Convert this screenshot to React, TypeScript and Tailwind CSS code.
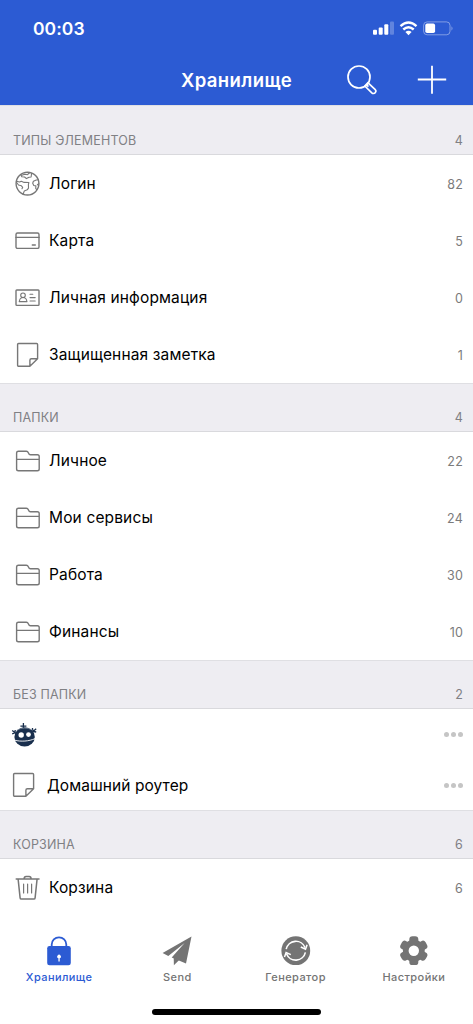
import type { ReactNode } from "react";

interface Entry {
  icon: ReactNode;
  label: string;
  count: number;
}

interface HeadingProps {
  title: string;
  count: number;
  className?: string;
}

interface TabProps {
  icon: ReactNode;
  label: string;
  active?: boolean;
}

const lineIcon = {
  width: 26,
  height: 26,
  viewBox: "0 0 26 26",
  fill: "none",
  stroke: "#777777",
  strokeWidth: 1.4,
  strokeLinejoin: "round" as const,
  strokeLinecap: "round" as const,
};

function GlobeIcon() {
  return (
    <svg {...lineIcon}>
      <circle cx="12.5" cy="12.6" r="11.4" />
      <path
        d="M5.7 3.6 6.8 5.8l2.8.2 1.8 1.6 2.7-1.4 2-.2.5-3.8M6.2 4.5l3.5-1.2 2.8.4 1.8-1.7M1.5 10.3l3.1.7 1.7-.8 2.8 1.2 4.8.1-.5 1.8.1 3.8-1.3 1.7-2.9 1.1-1.2 3.4M1.3 11l2.2 3 2.9.8 1.3 1.5-.7 1.4M23.5 8.8l-2.2.2-2.9 1.3-.7 2 1.1 2.2 2.1.4-.2 2.5 1 1.3M23.7 12.8l-1.3 1"
        strokeWidth="1.1"
      />
    </svg>
  );
}

function CardIcon() {
  return (
    <svg {...lineIcon}>
      <rect x="1" y="5" width="23" height="15.4" rx="1.5" />
      <path d="M1 9.4h23M17.3 17h3" />
    </svg>
  );
}

function IdentityIcon() {
  return (
    <svg {...lineIcon}>
      <rect x="1" y="5" width="23" height="15.4" rx=".8" />
      <g strokeWidth="1.1">
        <circle cx="8" cy="10.3" r="2.3" />
        <path d="M6.9 12.6c-1.6.7-2.5 2-2.7 4h7.8c-.2-2-1.2-3.3-2.8-4M15 9.3h2.8M15 12.6h5.2M15 16h5.2" />
      </g>
    </svg>
  );
}

function NoteIcon() {
  return (
    <svg {...lineIcon}>
      <path d="M3.6 1.5h18a1 1 0 0 1 1 1v14.2l-7.7 7.6H3.6a1 1 0 0 1-1-1V2.5a1 1 0 0 1 1-1ZM14.9 24.3v-6.1a1.5 1.5 0 0 1 1.5-1.5h6.2" />
    </svg>
  );
}

function FolderIcon() {
  return (
    <svg {...lineIcon}>
      <path d="M1.6 20.9V4.9a1.8 1.8 0 0 1 1.8-1.7h8c2.7 0 1.4 3.5 4 3.5h7a1.8 1.8 0 0 1 1.8 1.8v12.4a1.8 1.8 0 0 1-1.8 1.8h-19a1.8 1.8 0 0 1-1.8-1.8ZM1.6 11.4h22.6" />
    </svg>
  );
}

function TrashIcon() {
  return (
    <svg {...lineIcon} strokeWidth="1.5">
      <path d="M1.2 3.9h22.8M3.1 3.9l2 19a1.3 1.3 0 0 0 1.3 1.2h12.4a1.3 1.3 0 0 0 1.3-1.2l2-19M9.1 3.9c0-1.6.7-2.3 2-2.3h3c1.3 0 2 .7 2 2.3" />
      <path d="M8.6 9v9M12.6 9v9M16.6 9v9" strokeWidth="1.2" />
    </svg>
  );
}

function RobotIcon() {
  return (
    <svg width="26" height="26" viewBox="0 0 26 26">
      <g stroke="#192f4d" strokeWidth="1.3" fill="none">
        <path d="M12.4 1v5M9.4 4.2h6M1.2 8.5l4 3M1.2 11.8l2.8-1 .2-2.8M25.2 6.8l-4 3.4M21.4 6l.6 3.4 3.2.6" />
      </g>
      <ellipse cx="13.6" cy="14.9" rx="10.2" ry="9.6" fill="#192f4d" />
      <path d="M5.6 8.4Q13 4 21.4 7.9" stroke="#8d9bab" strokeWidth=".6" fill="none" />
      <circle cx="10.2" cy="13" r="2.7" fill="#fff" />
      <circle cx="17.5" cy="12.6" r="2.4" fill="#fff" />
      <path d="M3.6 18.2c6.5 1.6 14 1.2 20.6-1.6" stroke="#fff" strokeWidth=".9" fill="none" />
    </svg>
  );
}

function LockIcon() {
  return (
    <svg width="30" height="30" viewBox="0 0 30 30">
      <path d="M7.7 11V8.6a7.3 7.3 0 0 1 14.6 0V11" fill="none" stroke="#2c5bd3" strokeWidth="1.8" />
      <rect x="3.2" y="10" width="23.6" height="19.2" rx="2.3" fill="#2c5bd3" />
      <path d="M14.4 22.3v3.2h1.3v-3.2a1.8 1.8 0 1 0-1.3 0Z" fill="#fff" />
    </svg>
  );
}

function SendIcon() {
  return (
    <svg width="30" height="30" viewBox="0 0 30 30" fill="#747474">
      <path d="M29.5.4.6 16.9l5.7 3L22.6 6.9 9.7 21.4l3.6 1.6L24 27.6Z" />
      <path d="m11.7 21.5.2 7.8 5.3-5.2Z" />
    </svg>
  );
}

function GeneratorIcon() {
  return (
    <svg width="30" height="30" viewBox="0 0 30 30">
      <circle cx="14.8" cy="14.7" r="14.4" fill="#747474" />
      <g fill="none" stroke="#fff" strokeWidth="1.6">
        <path d="M5.2 13.2a9.9 9.9 0 0 1 18.9-1.6M24.4 16.4a9.9 9.9 0 0 1-18.9 1.4" />
        <path d="m19.8 11 4.7 2.2 1.6-4.5M9.8 18.6l-4.7-2.1-1.6 4.4" strokeWidth="1.5" />
      </g>
    </svg>
  );
}

function GearIcon() {
  return (
    <svg width="30" height="30" viewBox="0 0 30 30">
      <g fill="#747474">
        <circle cx="14.8" cy="14.7" r="10.9" />
        <rect x="10.3" y=".3" width="9" height="28.8" rx="3.2" />
        <rect x="10.3" y=".3" width="9" height="28.8" rx="3.2" transform="rotate(60 14.8 14.7)" />
        <rect x="10.3" y=".3" width="9" height="28.8" rx="3.2" transform="rotate(120 14.8 14.7)" />
      </g>
      <circle cx="14.8" cy="14.8" r="5.2" fill="#fff" />
    </svg>
  );
}

const types: Entry[] = [
  { icon: <GlobeIcon />, label: "Логин", count: 82 },
  { icon: <CardIcon />, label: "Карта", count: 5 },
  { icon: <IdentityIcon />, label: "Личная информация", count: 0 },
  { icon: <NoteIcon />, label: "Защищенная заметка", count: 1 },
];

const folders: Entry[] = [
  { icon: <FolderIcon />, label: "Личное", count: 22 },
  { icon: <FolderIcon />, label: "Мои сервисы", count: 24 },
  { icon: <FolderIcon />, label: "Работа", count: 30 },
  { icon: <FolderIcon />, label: "Финансы", count: 10 },
];

function Heading({ title, count, className = "h-[49px]" }: HeadingProps) {
  return (
    <div
      className={`flex shrink-0 items-end justify-between border-y border-t-[#dfdfe3] border-b-[#d9d9dd] bg-[#eeedf2] pr-[10px] pb-[4px] pl-[13px] text-[12.5px] leading-[18px] tracking-[0.18px] text-[#808084] ${className}`}
    >
      <h2>{title}</h2>
      <span>{count}</span>
    </div>
  );
}

function Row({ icon, label, count }: Entry) {
  return (
    <div className="flex h-[57px] shrink-0 items-center pr-[10px] pl-[15px]">
      {icon}
      <span className="ml-2 flex-1 text-[15.5px] tracking-[0.14px]">{label}</span>
      <span className="pt-[2px] text-[12.5px] leading-[18px] tracking-[0.2px] text-[#7b7b7b]">
        {count}
      </span>
    </div>
  );
}

function Dots() {
  return (
    <div className="flex gap-[2px]">
      <i className="size-[5px] rounded-full bg-[#c5c5c5]" />
      <i className="size-[5px] rounded-full bg-[#c5c5c5]" />
      <i className="size-[5px] rounded-full bg-[#c5c5c5]" />
    </div>
  );
}

function Tab({ icon, label, active = false }: TabProps) {
  return (
    <button
      className={`flex flex-col items-center text-[11px] leading-[14px] font-medium tracking-[0.42px] ${
        active ? "text-[#2c5bd3]" : "text-[#747474]"
      }`}
    >
      {icon}
      <span className="mt-[4px] whitespace-nowrap">{label}</span>
    </button>
  );
}

function StatusBar() {
  return (
    <div className="flex h-[55px] items-center justify-between pt-[2px] pr-[19px] pl-[33px]">
      <span className="pt-[2px] text-[17.5px] font-semibold tracking-[0.05px]">00:03</span>
      <svg width="82" height="16" viewBox="0 0 82 16" fill="#fff">
        <rect x="1" y="8.8" width="4" height="5" rx="1" />
        <rect x="6.7" y="6.5" width="4" height="7.3" rx="1" />
        <rect x="12.3" y="3.2" width="4" height="10.6" rx="1" />
        <rect x="18" y=".6" width="4" height="13.2" rx="1" opacity=".25" />
        <g fill="none" stroke="#fff" strokeWidth="2.4">
          <path d="M28.5 5.1q8-7 16 0M31.3 8.5q5.2-4.6 10.4 0" />
        </g>
        <path d="M33.4 11q3.1-2.7 6.2 0l-3.1 3.2Z" />
        <rect x="51.6" y=".9" width="26.4" height="12.9" rx="3.5" fill="none" stroke="#fff" opacity=".4" />
        <rect x="53.3" y="2.6" width="9.8" height="9.5" rx="1.8" />
        <path d="M79.5 5.2q2 2.2 0 4.5Z" opacity=".45" />
      </svg>
    </div>
  );
}

export default function App() {
  return (
    <div className="flex h-[1024px] w-[473px] flex-col overflow-hidden bg-white font-['Inter','Noto_Sans',sans-serif] text-black">
      <header className="h-[105px] shrink-0 bg-[#2c5bd3] text-white">
        <StatusBar />
        <div className="flex h-[50px] items-center px-[26px]">
          <h1 className="ml-[155px] w-[140px] pt-[2px] text-[18.5px] font-semibold tracking-[0.4px]">
            Хранилище
          </h1>
          <svg
            className="ml-[26px]"
            width="30"
            height="30"
            viewBox="0 0 30 30"
            fill="none"
            stroke="#fff"
            strokeWidth="1.7"
          >
            <circle cx="12" cy="12" r="11" />
            <path d="m19.4 19.6 2 2M20.8 17.7l7.2 6.6c2.3 2.2-.8 5.7-3.2 3.5L17.8 21Z" strokeLinejoin="round" />
          </svg>
          <svg
            className="ml-auto"
            width="30"
            height="30"
            viewBox="0 0 30 30"
            stroke="#fff"
            strokeWidth="1.8"
          >
            <path d="M15 .8v28M.8 14.5h28.4" />
          </svg>
        </div>
      </header>

      <main className="flex flex-1 flex-col">
        <Heading title="ТИПЫ ЭЛЕМЕНТОВ" count={4} className="h-[50px]" />
        {types.map((entry) => (
          <Row key={entry.label} {...entry} />
        ))}
        <Heading title="ПАПКИ" count={4} />
        {folders.map((entry) => (
          <Row key={entry.label} {...entry} />
        ))}
        <Heading title="БЕЗ ПАПКИ" count={2} />
        <div className="flex h-[51px] items-center justify-between pr-[10px] pl-[11px]">
          <RobotIcon />
          <Dots />
        </div>
        <div className="flex h-[50px] items-center pr-[10px] pl-[11px]">
          <NoteIcon />
          <span className="ml-[10px] flex-1 pt-px text-[15.5px] tracking-[0.08px]">
            Домашний роутер
          </span>
          <Dots />
        </div>
        <Heading title="КОРЗИНА" count={6} />
        <Row icon={<TrashIcon />} label="Корзина" count={6} />
      </main>

      <nav className="grid h-[88px] shrink-0 grid-cols-4 content-start">
        <Tab icon={<LockIcon />} label="Хранилище" active />
        <Tab icon={<SendIcon />} label="Send" />
        <Tab icon={<GeneratorIcon />} label="Генератор" />
        <Tab icon={<GearIcon />} label="Настройки" />
        <div className="col-span-4 mx-auto mt-[25px] h-[6px] w-[169px] rounded-full bg-black" />
      </nav>
    </div>
  );
}
